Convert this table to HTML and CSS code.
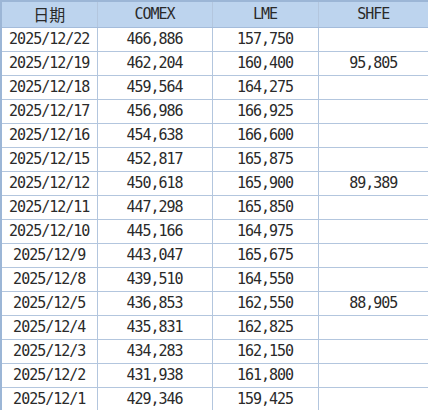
FILE: index.html
```html
<!DOCTYPE html>
<html lang="zh">
<head>
<meta charset="utf-8">
<link rel="stylesheet" href="styles.css">
</head>
<body>
<table class="inv">
  <colgroup>
    <col class="c-date"><col class="c-comex"><col class="c-lme"><col class="c-shfe">
  </colgroup>
  <thead>
    <tr class="head"><th class="cjk">日期</th><th>COMEX</th><th>LME</th><th>SHFE</th></tr>
  </thead>
  <tbody>
    <tr><td>2025/12/22</td><td>466,886</td><td>157,750</td><td></td></tr>
    <tr><td>2025/12/19</td><td>462,204</td><td>160,400</td><td>95,805</td></tr>
    <tr><td>2025/12/18</td><td>459,564</td><td>164,275</td><td></td></tr>
    <tr><td>2025/12/17</td><td>456,986</td><td>166,925</td><td></td></tr>
    <tr><td>2025/12/16</td><td>454,638</td><td>166,600</td><td></td></tr>
    <tr><td>2025/12/15</td><td>452,817</td><td>165,875</td><td></td></tr>
    <tr><td>2025/12/12</td><td>450,618</td><td>165,900</td><td>89,389</td></tr>
    <tr><td>2025/12/11</td><td>447,298</td><td>165,850</td><td></td></tr>
    <tr><td>2025/12/10</td><td>445,166</td><td>164,975</td><td></td></tr>
    <tr><td>2025/12/9</td><td>443,047</td><td>165,675</td><td></td></tr>
    <tr><td>2025/12/8</td><td>439,510</td><td>164,550</td><td></td></tr>
    <tr><td>2025/12/5</td><td>436,853</td><td>162,550</td><td>88,905</td></tr>
    <tr><td>2025/12/4</td><td>435,831</td><td>162,825</td><td></td></tr>
    <tr><td>2025/12/3</td><td>434,283</td><td>162,150</td><td></td></tr>
    <tr><td>2025/12/2</td><td>431,938</td><td>161,800</td><td></td></tr>
    <tr><td>2025/12/1</td><td>429,346</td><td>159,425</td><td></td></tr>
  </tbody>
</table>
</body>
</html>
```
FILE: styles.css
```css
html, body {
  margin: 0;
  padding: 0;
  background: #ffffff;
}
.inv {
  border-collapse: collapse;
  table-layout: fixed;
  width: 428px;
  border: 2px solid #9cb6d6;
  font-family: "DejaVu Sans Mono", "Liberation Mono", monospace;
  font-size: 15px;
  letter-spacing: -1px;
  color: #2a2a2a;
}
.c-date { width: 96px; }
.c-comex { width: 115px; }
.c-lme { width: 106px; }
.c-shfe { width: 111px; }
.inv th, .inv td {
  border: 1px solid #b3c6de;
  padding: 0;
  text-align: center;
  vertical-align: middle;
  font-weight: normal;
  white-space: nowrap;
}
.inv thead tr {
  height: 26px;
  background: #bdd4ee;
}
.inv thead th {
  border-bottom: 1px solid #a4bcdb;
}
.inv th.cjk {
  font-family: "Noto Sans CJK SC", sans-serif;
  font-size: 16px;
  letter-spacing: 0;
}
.inv tbody tr {
  height: 24px;
}
```
